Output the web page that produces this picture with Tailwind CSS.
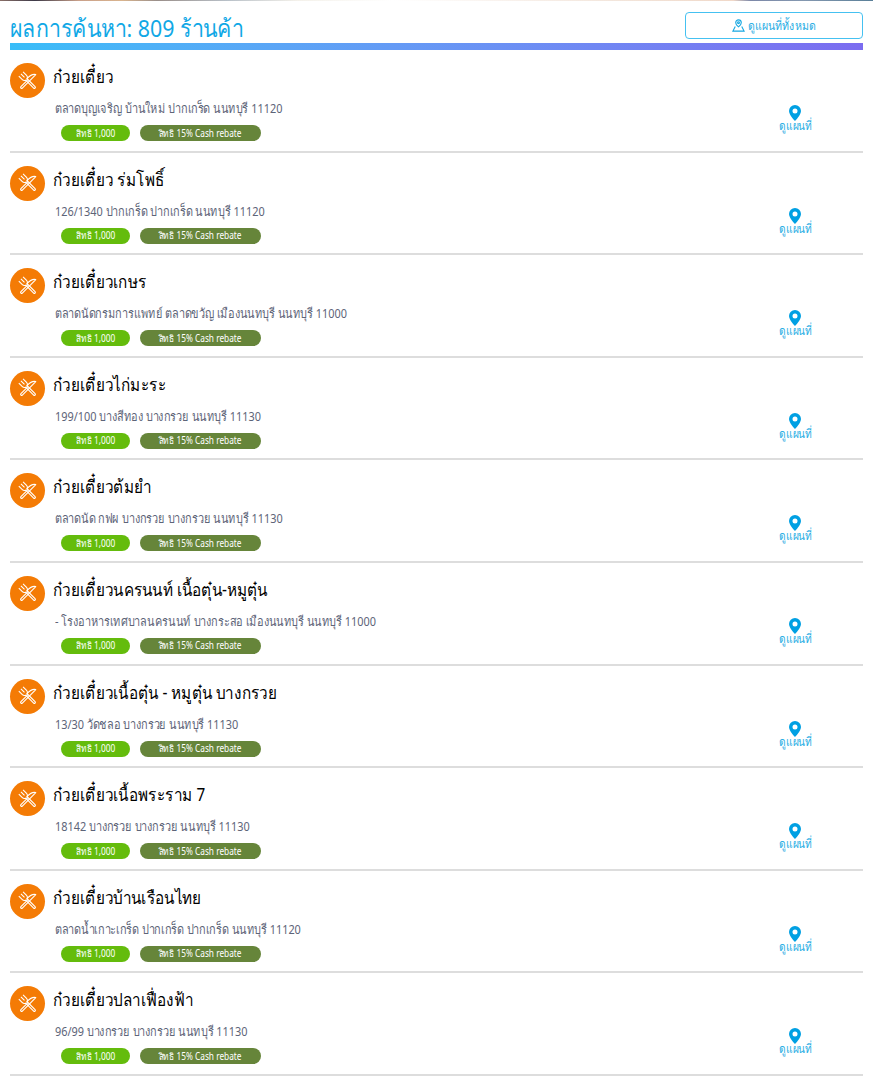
<!DOCTYPE html>
<html><head><meta charset="utf-8"><script src="https://cdn.jsdelivr.net/npm/@tailwindcss/browser@4"></script></head>
<body class="bg-white overflow-hidden font-['Noto_Sans',sans-serif]">
<div class="h-[1080px] w-[873px] overflow-hidden">
<div class="h-[1px] bg-[linear-gradient(90deg,#8a6f68_0,#3d3a48_4%,#c9a08a_9%,#d9b48e_14%,#9a8f8a_18%,#b8c0c8_26%,#f4f1ea_34%,#ffffff_45%,#f3e6dc_70%,#f0d8c8_84%,#7c88a8_86%,#8498b0_92%,#5a7f98_100%)]"></div>
<div class="mx-[10px] w-[853px]">
<div class="flex justify-between h-[42px]">
<div class="text-[24px] leading-[32px] mt-[11px] text-[#10a8e6] whitespace-nowrap scale-x-[.89] origin-left">ผลการค้นหา: 809 ร้านค้า</div>
<div class="mt-[11px] w-[178px] h-[27px] border-[1.5px] border-[#45c1f1] rounded-[4px] flex items-center justify-center gap-[3px] text-[12px] text-[#2aaee4]">
<svg class="w-[13px] h-[13px]" viewBox="0 0 14 14" fill="none" stroke="#17a8e2" stroke-width="1.200"><path d="M7 1a3 3 0 0 1 3 3c0 2-3 4.500-3 4.500S4 6 4 4a3 3 0 0 1 3-3z"/><circle cx="7" cy="4" r="1"/><path d="M3.500 8 1 13h12l-2.500-5"/></svg>
<span class="whitespace-nowrap scale-x-[.88] origin-left w-[68px]">ดูแผนที่ทั้งหมด</span></div>
</div>
<div class="h-[7px] bg-gradient-to-r from-[#38bdf8] to-[#7b6cf0]"></div>
<div class="flex flex-col">

<div class="h-[102.6px] border-b-2 border-[#dddddd] flex">
  <div class="flex-1 pt-[13px]">
    <div class="flex items-start gap-[8px]">
      <div class="w-[35px] h-[35px] rounded-full bg-[#f47b05] flex items-center justify-center"><svg class="w-[24px] h-[24px]" viewBox="-12 -12 24 24" fill="none" stroke="#fff" stroke-width="1.100" stroke-linejoin="round"><g transform="rotate(-45)"><path d="M-3-10v5a3 3 0 0 0 2 2.800V9a1 1 0 0 0 2 0V-2.200A3 3 0 0 0 3-5v-5M0-10v5"/></g><g transform="rotate(45)"><path d="M-1 9a1 1 0 0 0 2 0V-10C-1-9-2.500-5-2.500-1L-1 0z"/></g></svg></div>
      <div class="text-[18px] leading-[28px] -mt-[1px] text-black whitespace-nowrap scale-x-[.85] origin-left">ก๋วยเตี๋ยว</div>
    </div>
    <div class="ml-[45px] mt-[0px] text-[13px] leading-[20px] text-[#5d6478] whitespace-nowrap scale-x-[.84] origin-left">ตลาดบุญเจริญ บ้านใหม่ ปากเกร็ด นนทบุรี 11120</div>
    <div class="ml-[51px] mt-[7px] flex gap-[10px] text-[10px] text-white">
      <span class="w-[69px] h-[16px] rounded-full bg-[#64bc0c] flex items-center justify-center"><span class="whitespace-nowrap scale-x-[.83]">สิทธิ 1,000</span></span>
      <span class="w-[121px] h-[16px] rounded-full bg-[#66853a] flex items-center justify-center"><span class="whitespace-nowrap scale-x-[.83]">สิทธิ 15% Cash rebate</span></span>
    </div>
  </div>
  <div class="w-[136px] flex flex-col items-center pt-[55px] text-[12px] leading-[14px] text-[#2aaee4]"><svg class="w-[12px] h-[16px]" viewBox="0 0 12 16"><path fill="#00a0e3" fill-rule="evenodd" d="M6 0a6 6 0 0 1 6 6c0 4-6 10-6 10S0 10 0 6a6 6 0 0 1 6-6zm0 3.500a2.500 2.500 0 1 0 0 5 2.500 2.500 0 0 0 0-5z"/></svg><span class="whitespace-nowrap scale-x-[.85] -mt-[2px]">ดูแผนที่</span></div>
</div>

<div class="h-[102.6px] border-b-2 border-[#dddddd] flex">
  <div class="flex-1 pt-[13px]">
    <div class="flex items-start gap-[8px]">
      <div class="w-[35px] h-[35px] rounded-full bg-[#f47b05] flex items-center justify-center"><svg class="w-[24px] h-[24px]" viewBox="-12 -12 24 24" fill="none" stroke="#fff" stroke-width="1.100" stroke-linejoin="round"><g transform="rotate(-45)"><path d="M-3-10v5a3 3 0 0 0 2 2.800V9a1 1 0 0 0 2 0V-2.200A3 3 0 0 0 3-5v-5M0-10v5"/></g><g transform="rotate(45)"><path d="M-1 9a1 1 0 0 0 2 0V-10C-1-9-2.500-5-2.500-1L-1 0z"/></g></svg></div>
      <div class="text-[18px] leading-[28px] -mt-[1px] text-black whitespace-nowrap scale-x-[.85] origin-left">ก๋วยเตี๋ยว ร่มโพธิ์</div>
    </div>
    <div class="ml-[45px] mt-[0px] text-[13px] leading-[20px] text-[#5d6478] whitespace-nowrap scale-x-[.84] origin-left">126/1340 ปากเกร็ด ปากเกร็ด นนทบุรี 11120</div>
    <div class="ml-[51px] mt-[7px] flex gap-[10px] text-[10px] text-white">
      <span class="w-[69px] h-[16px] rounded-full bg-[#64bc0c] flex items-center justify-center"><span class="whitespace-nowrap scale-x-[.83]">สิทธิ 1,000</span></span>
      <span class="w-[121px] h-[16px] rounded-full bg-[#66853a] flex items-center justify-center"><span class="whitespace-nowrap scale-x-[.83]">สิทธิ 15% Cash rebate</span></span>
    </div>
  </div>
  <div class="w-[136px] flex flex-col items-center pt-[55px] text-[12px] leading-[14px] text-[#2aaee4]"><svg class="w-[12px] h-[16px]" viewBox="0 0 12 16"><path fill="#00a0e3" fill-rule="evenodd" d="M6 0a6 6 0 0 1 6 6c0 4-6 10-6 10S0 10 0 6a6 6 0 0 1 6-6zm0 3.500a2.500 2.500 0 1 0 0 5 2.500 2.500 0 0 0 0-5z"/></svg><span class="whitespace-nowrap scale-x-[.85] -mt-[2px]">ดูแผนที่</span></div>
</div>

<div class="h-[102.6px] border-b-2 border-[#dddddd] flex">
  <div class="flex-1 pt-[13px]">
    <div class="flex items-start gap-[8px]">
      <div class="w-[35px] h-[35px] rounded-full bg-[#f47b05] flex items-center justify-center"><svg class="w-[24px] h-[24px]" viewBox="-12 -12 24 24" fill="none" stroke="#fff" stroke-width="1.100" stroke-linejoin="round"><g transform="rotate(-45)"><path d="M-3-10v5a3 3 0 0 0 2 2.800V9a1 1 0 0 0 2 0V-2.200A3 3 0 0 0 3-5v-5M0-10v5"/></g><g transform="rotate(45)"><path d="M-1 9a1 1 0 0 0 2 0V-10C-1-9-2.500-5-2.500-1L-1 0z"/></g></svg></div>
      <div class="text-[18px] leading-[28px] -mt-[1px] text-black whitespace-nowrap scale-x-[.85] origin-left">ก๋วยเตี๋ยวเกษร</div>
    </div>
    <div class="ml-[45px] mt-[0px] text-[13px] leading-[20px] text-[#5d6478] whitespace-nowrap scale-x-[.84] origin-left">ตลาดนัดกรมการแพทย์ ตลาดขวัญ เมืองนนทบุรี นนทบุรี 11000</div>
    <div class="ml-[51px] mt-[7px] flex gap-[10px] text-[10px] text-white">
      <span class="w-[69px] h-[16px] rounded-full bg-[#64bc0c] flex items-center justify-center"><span class="whitespace-nowrap scale-x-[.83]">สิทธิ 1,000</span></span>
      <span class="w-[121px] h-[16px] rounded-full bg-[#66853a] flex items-center justify-center"><span class="whitespace-nowrap scale-x-[.83]">สิทธิ 15% Cash rebate</span></span>
    </div>
  </div>
  <div class="w-[136px] flex flex-col items-center pt-[55px] text-[12px] leading-[14px] text-[#2aaee4]"><svg class="w-[12px] h-[16px]" viewBox="0 0 12 16"><path fill="#00a0e3" fill-rule="evenodd" d="M6 0a6 6 0 0 1 6 6c0 4-6 10-6 10S0 10 0 6a6 6 0 0 1 6-6zm0 3.500a2.500 2.500 0 1 0 0 5 2.500 2.500 0 0 0 0-5z"/></svg><span class="whitespace-nowrap scale-x-[.85] -mt-[2px]">ดูแผนที่</span></div>
</div>

<div class="h-[102.6px] border-b-2 border-[#dddddd] flex">
  <div class="flex-1 pt-[13px]">
    <div class="flex items-start gap-[8px]">
      <div class="w-[35px] h-[35px] rounded-full bg-[#f47b05] flex items-center justify-center"><svg class="w-[24px] h-[24px]" viewBox="-12 -12 24 24" fill="none" stroke="#fff" stroke-width="1.100" stroke-linejoin="round"><g transform="rotate(-45)"><path d="M-3-10v5a3 3 0 0 0 2 2.800V9a1 1 0 0 0 2 0V-2.200A3 3 0 0 0 3-5v-5M0-10v5"/></g><g transform="rotate(45)"><path d="M-1 9a1 1 0 0 0 2 0V-10C-1-9-2.500-5-2.500-1L-1 0z"/></g></svg></div>
      <div class="text-[18px] leading-[28px] -mt-[1px] text-black whitespace-nowrap scale-x-[.85] origin-left">ก๋วยเตี๋ยวไก่มะระ</div>
    </div>
    <div class="ml-[45px] mt-[0px] text-[13px] leading-[20px] text-[#5d6478] whitespace-nowrap scale-x-[.84] origin-left">199/100 บางสีทอง บางกรวย นนทบุรี 11130</div>
    <div class="ml-[51px] mt-[7px] flex gap-[10px] text-[10px] text-white">
      <span class="w-[69px] h-[16px] rounded-full bg-[#64bc0c] flex items-center justify-center"><span class="whitespace-nowrap scale-x-[.83]">สิทธิ 1,000</span></span>
      <span class="w-[121px] h-[16px] rounded-full bg-[#66853a] flex items-center justify-center"><span class="whitespace-nowrap scale-x-[.83]">สิทธิ 15% Cash rebate</span></span>
    </div>
  </div>
  <div class="w-[136px] flex flex-col items-center pt-[55px] text-[12px] leading-[14px] text-[#2aaee4]"><svg class="w-[12px] h-[16px]" viewBox="0 0 12 16"><path fill="#00a0e3" fill-rule="evenodd" d="M6 0a6 6 0 0 1 6 6c0 4-6 10-6 10S0 10 0 6a6 6 0 0 1 6-6zm0 3.500a2.500 2.500 0 1 0 0 5 2.500 2.500 0 0 0 0-5z"/></svg><span class="whitespace-nowrap scale-x-[.85] -mt-[2px]">ดูแผนที่</span></div>
</div>

<div class="h-[102.6px] border-b-2 border-[#dddddd] flex">
  <div class="flex-1 pt-[13px]">
    <div class="flex items-start gap-[8px]">
      <div class="w-[35px] h-[35px] rounded-full bg-[#f47b05] flex items-center justify-center"><svg class="w-[24px] h-[24px]" viewBox="-12 -12 24 24" fill="none" stroke="#fff" stroke-width="1.100" stroke-linejoin="round"><g transform="rotate(-45)"><path d="M-3-10v5a3 3 0 0 0 2 2.800V9a1 1 0 0 0 2 0V-2.200A3 3 0 0 0 3-5v-5M0-10v5"/></g><g transform="rotate(45)"><path d="M-1 9a1 1 0 0 0 2 0V-10C-1-9-2.500-5-2.500-1L-1 0z"/></g></svg></div>
      <div class="text-[18px] leading-[28px] -mt-[1px] text-black whitespace-nowrap scale-x-[.85] origin-left">ก๋วยเตี๋ยวต้มยำ</div>
    </div>
    <div class="ml-[45px] mt-[0px] text-[13px] leading-[20px] text-[#5d6478] whitespace-nowrap scale-x-[.84] origin-left">ตลาดนัด กฟผ บางกรวย บางกรวย นนทบุรี 11130</div>
    <div class="ml-[51px] mt-[7px] flex gap-[10px] text-[10px] text-white">
      <span class="w-[69px] h-[16px] rounded-full bg-[#64bc0c] flex items-center justify-center"><span class="whitespace-nowrap scale-x-[.83]">สิทธิ 1,000</span></span>
      <span class="w-[121px] h-[16px] rounded-full bg-[#66853a] flex items-center justify-center"><span class="whitespace-nowrap scale-x-[.83]">สิทธิ 15% Cash rebate</span></span>
    </div>
  </div>
  <div class="w-[136px] flex flex-col items-center pt-[55px] text-[12px] leading-[14px] text-[#2aaee4]"><svg class="w-[12px] h-[16px]" viewBox="0 0 12 16"><path fill="#00a0e3" fill-rule="evenodd" d="M6 0a6 6 0 0 1 6 6c0 4-6 10-6 10S0 10 0 6a6 6 0 0 1 6-6zm0 3.500a2.500 2.500 0 1 0 0 5 2.500 2.500 0 0 0 0-5z"/></svg><span class="whitespace-nowrap scale-x-[.85] -mt-[2px]">ดูแผนที่</span></div>
</div>

<div class="h-[102.6px] border-b-2 border-[#dddddd] flex">
  <div class="flex-1 pt-[13px]">
    <div class="flex items-start gap-[8px]">
      <div class="w-[35px] h-[35px] rounded-full bg-[#f47b05] flex items-center justify-center"><svg class="w-[24px] h-[24px]" viewBox="-12 -12 24 24" fill="none" stroke="#fff" stroke-width="1.100" stroke-linejoin="round"><g transform="rotate(-45)"><path d="M-3-10v5a3 3 0 0 0 2 2.800V9a1 1 0 0 0 2 0V-2.200A3 3 0 0 0 3-5v-5M0-10v5"/></g><g transform="rotate(45)"><path d="M-1 9a1 1 0 0 0 2 0V-10C-1-9-2.500-5-2.500-1L-1 0z"/></g></svg></div>
      <div class="text-[18px] leading-[28px] -mt-[1px] text-black whitespace-nowrap scale-x-[.85] origin-left">ก๋วยเตี๋ยวนครนนท์ เนื้อตุ๋น-หมูตุ๋น</div>
    </div>
    <div class="ml-[45px] mt-[0px] text-[13px] leading-[20px] text-[#5d6478] whitespace-nowrap scale-x-[.84] origin-left">- โรงอาหารเทศบาลนครนนท์ บางกระสอ เมืองนนทบุรี นนทบุรี 11000</div>
    <div class="ml-[51px] mt-[7px] flex gap-[10px] text-[10px] text-white">
      <span class="w-[69px] h-[16px] rounded-full bg-[#64bc0c] flex items-center justify-center"><span class="whitespace-nowrap scale-x-[.83]">สิทธิ 1,000</span></span>
      <span class="w-[121px] h-[16px] rounded-full bg-[#66853a] flex items-center justify-center"><span class="whitespace-nowrap scale-x-[.83]">สิทธิ 15% Cash rebate</span></span>
    </div>
  </div>
  <div class="w-[136px] flex flex-col items-center pt-[55px] text-[12px] leading-[14px] text-[#2aaee4]"><svg class="w-[12px] h-[16px]" viewBox="0 0 12 16"><path fill="#00a0e3" fill-rule="evenodd" d="M6 0a6 6 0 0 1 6 6c0 4-6 10-6 10S0 10 0 6a6 6 0 0 1 6-6zm0 3.500a2.500 2.500 0 1 0 0 5 2.500 2.500 0 0 0 0-5z"/></svg><span class="whitespace-nowrap scale-x-[.85] -mt-[2px]">ดูแผนที่</span></div>
</div>

<div class="h-[102.6px] border-b-2 border-[#dddddd] flex">
  <div class="flex-1 pt-[13px]">
    <div class="flex items-start gap-[8px]">
      <div class="w-[35px] h-[35px] rounded-full bg-[#f47b05] flex items-center justify-center"><svg class="w-[24px] h-[24px]" viewBox="-12 -12 24 24" fill="none" stroke="#fff" stroke-width="1.100" stroke-linejoin="round"><g transform="rotate(-45)"><path d="M-3-10v5a3 3 0 0 0 2 2.800V9a1 1 0 0 0 2 0V-2.200A3 3 0 0 0 3-5v-5M0-10v5"/></g><g transform="rotate(45)"><path d="M-1 9a1 1 0 0 0 2 0V-10C-1-9-2.500-5-2.500-1L-1 0z"/></g></svg></div>
      <div class="text-[18px] leading-[28px] -mt-[1px] text-black whitespace-nowrap scale-x-[.85] origin-left">ก๋วยเตี๋ยวเนื้อตุ๋น - หมูตุ๋น บางกรวย</div>
    </div>
    <div class="ml-[45px] mt-[0px] text-[13px] leading-[20px] text-[#5d6478] whitespace-nowrap scale-x-[.84] origin-left">13/30 วัดชลอ บางกรวย นนทบุรี 11130</div>
    <div class="ml-[51px] mt-[7px] flex gap-[10px] text-[10px] text-white">
      <span class="w-[69px] h-[16px] rounded-full bg-[#64bc0c] flex items-center justify-center"><span class="whitespace-nowrap scale-x-[.83]">สิทธิ 1,000</span></span>
      <span class="w-[121px] h-[16px] rounded-full bg-[#66853a] flex items-center justify-center"><span class="whitespace-nowrap scale-x-[.83]">สิทธิ 15% Cash rebate</span></span>
    </div>
  </div>
  <div class="w-[136px] flex flex-col items-center pt-[55px] text-[12px] leading-[14px] text-[#2aaee4]"><svg class="w-[12px] h-[16px]" viewBox="0 0 12 16"><path fill="#00a0e3" fill-rule="evenodd" d="M6 0a6 6 0 0 1 6 6c0 4-6 10-6 10S0 10 0 6a6 6 0 0 1 6-6zm0 3.500a2.500 2.500 0 1 0 0 5 2.500 2.500 0 0 0 0-5z"/></svg><span class="whitespace-nowrap scale-x-[.85] -mt-[2px]">ดูแผนที่</span></div>
</div>

<div class="h-[102.6px] border-b-2 border-[#dddddd] flex">
  <div class="flex-1 pt-[13px]">
    <div class="flex items-start gap-[8px]">
      <div class="w-[35px] h-[35px] rounded-full bg-[#f47b05] flex items-center justify-center"><svg class="w-[24px] h-[24px]" viewBox="-12 -12 24 24" fill="none" stroke="#fff" stroke-width="1.100" stroke-linejoin="round"><g transform="rotate(-45)"><path d="M-3-10v5a3 3 0 0 0 2 2.800V9a1 1 0 0 0 2 0V-2.200A3 3 0 0 0 3-5v-5M0-10v5"/></g><g transform="rotate(45)"><path d="M-1 9a1 1 0 0 0 2 0V-10C-1-9-2.500-5-2.500-1L-1 0z"/></g></svg></div>
      <div class="text-[18px] leading-[28px] -mt-[1px] text-black whitespace-nowrap scale-x-[.85] origin-left">ก๋วยเตี๋ยวเนื้อพระราม 7</div>
    </div>
    <div class="ml-[45px] mt-[0px] text-[13px] leading-[20px] text-[#5d6478] whitespace-nowrap scale-x-[.84] origin-left">18142 บางกรวย บางกรวย นนทบุรี 11130</div>
    <div class="ml-[51px] mt-[7px] flex gap-[10px] text-[10px] text-white">
      <span class="w-[69px] h-[16px] rounded-full bg-[#64bc0c] flex items-center justify-center"><span class="whitespace-nowrap scale-x-[.83]">สิทธิ 1,000</span></span>
      <span class="w-[121px] h-[16px] rounded-full bg-[#66853a] flex items-center justify-center"><span class="whitespace-nowrap scale-x-[.83]">สิทธิ 15% Cash rebate</span></span>
    </div>
  </div>
  <div class="w-[136px] flex flex-col items-center pt-[55px] text-[12px] leading-[14px] text-[#2aaee4]"><svg class="w-[12px] h-[16px]" viewBox="0 0 12 16"><path fill="#00a0e3" fill-rule="evenodd" d="M6 0a6 6 0 0 1 6 6c0 4-6 10-6 10S0 10 0 6a6 6 0 0 1 6-6zm0 3.500a2.500 2.500 0 1 0 0 5 2.500 2.500 0 0 0 0-5z"/></svg><span class="whitespace-nowrap scale-x-[.85] -mt-[2px]">ดูแผนที่</span></div>
</div>

<div class="h-[102.6px] border-b-2 border-[#dddddd] flex">
  <div class="flex-1 pt-[13px]">
    <div class="flex items-start gap-[8px]">
      <div class="w-[35px] h-[35px] rounded-full bg-[#f47b05] flex items-center justify-center"><svg class="w-[24px] h-[24px]" viewBox="-12 -12 24 24" fill="none" stroke="#fff" stroke-width="1.100" stroke-linejoin="round"><g transform="rotate(-45)"><path d="M-3-10v5a3 3 0 0 0 2 2.800V9a1 1 0 0 0 2 0V-2.200A3 3 0 0 0 3-5v-5M0-10v5"/></g><g transform="rotate(45)"><path d="M-1 9a1 1 0 0 0 2 0V-10C-1-9-2.500-5-2.500-1L-1 0z"/></g></svg></div>
      <div class="text-[18px] leading-[28px] -mt-[1px] text-black whitespace-nowrap scale-x-[.85] origin-left">ก๋วยเตี๋ยวบ้านเรือนไทย</div>
    </div>
    <div class="ml-[45px] mt-[0px] text-[13px] leading-[20px] text-[#5d6478] whitespace-nowrap scale-x-[.84] origin-left">ตลาดน้ำเกาะเกร็ด ปากเกร็ด ปากเกร็ด นนทบุรี 11120</div>
    <div class="ml-[51px] mt-[7px] flex gap-[10px] text-[10px] text-white">
      <span class="w-[69px] h-[16px] rounded-full bg-[#64bc0c] flex items-center justify-center"><span class="whitespace-nowrap scale-x-[.83]">สิทธิ 1,000</span></span>
      <span class="w-[121px] h-[16px] rounded-full bg-[#66853a] flex items-center justify-center"><span class="whitespace-nowrap scale-x-[.83]">สิทธิ 15% Cash rebate</span></span>
    </div>
  </div>
  <div class="w-[136px] flex flex-col items-center pt-[55px] text-[12px] leading-[14px] text-[#2aaee4]"><svg class="w-[12px] h-[16px]" viewBox="0 0 12 16"><path fill="#00a0e3" fill-rule="evenodd" d="M6 0a6 6 0 0 1 6 6c0 4-6 10-6 10S0 10 0 6a6 6 0 0 1 6-6zm0 3.500a2.500 2.500 0 1 0 0 5 2.500 2.500 0 0 0 0-5z"/></svg><span class="whitespace-nowrap scale-x-[.85] -mt-[2px]">ดูแผนที่</span></div>
</div>

<div class="h-[102.6px] border-b-2 border-[#dddddd] flex">
  <div class="flex-1 pt-[13px]">
    <div class="flex items-start gap-[8px]">
      <div class="w-[35px] h-[35px] rounded-full bg-[#f47b05] flex items-center justify-center"><svg class="w-[24px] h-[24px]" viewBox="-12 -12 24 24" fill="none" stroke="#fff" stroke-width="1.100" stroke-linejoin="round"><g transform="rotate(-45)"><path d="M-3-10v5a3 3 0 0 0 2 2.800V9a1 1 0 0 0 2 0V-2.200A3 3 0 0 0 3-5v-5M0-10v5"/></g><g transform="rotate(45)"><path d="M-1 9a1 1 0 0 0 2 0V-10C-1-9-2.500-5-2.500-1L-1 0z"/></g></svg></div>
      <div class="text-[18px] leading-[28px] -mt-[1px] text-black whitespace-nowrap scale-x-[.85] origin-left">ก๋วยเตี๋ยวปลาเฟื่องฟ้า</div>
    </div>
    <div class="ml-[45px] mt-[0px] text-[13px] leading-[20px] text-[#5d6478] whitespace-nowrap scale-x-[.84] origin-left">96/99 บางกรวย บางกรวย นนทบุรี 11130</div>
    <div class="ml-[51px] mt-[7px] flex gap-[10px] text-[10px] text-white">
      <span class="w-[69px] h-[16px] rounded-full bg-[#64bc0c] flex items-center justify-center"><span class="whitespace-nowrap scale-x-[.83]">สิทธิ 1,000</span></span>
      <span class="w-[121px] h-[16px] rounded-full bg-[#66853a] flex items-center justify-center"><span class="whitespace-nowrap scale-x-[.83]">สิทธิ 15% Cash rebate</span></span>
    </div>
  </div>
  <div class="w-[136px] flex flex-col items-center pt-[55px] text-[12px] leading-[14px] text-[#2aaee4]"><svg class="w-[12px] h-[16px]" viewBox="0 0 12 16"><path fill="#00a0e3" fill-rule="evenodd" d="M6 0a6 6 0 0 1 6 6c0 4-6 10-6 10S0 10 0 6a6 6 0 0 1 6-6zm0 3.500a2.500 2.500 0 1 0 0 5 2.500 2.500 0 0 0 0-5z"/></svg><span class="whitespace-nowrap scale-x-[.85] -mt-[2px]">ดูแผนที่</span></div>
</div>

</div>
</div>
</div>
</body></html>
